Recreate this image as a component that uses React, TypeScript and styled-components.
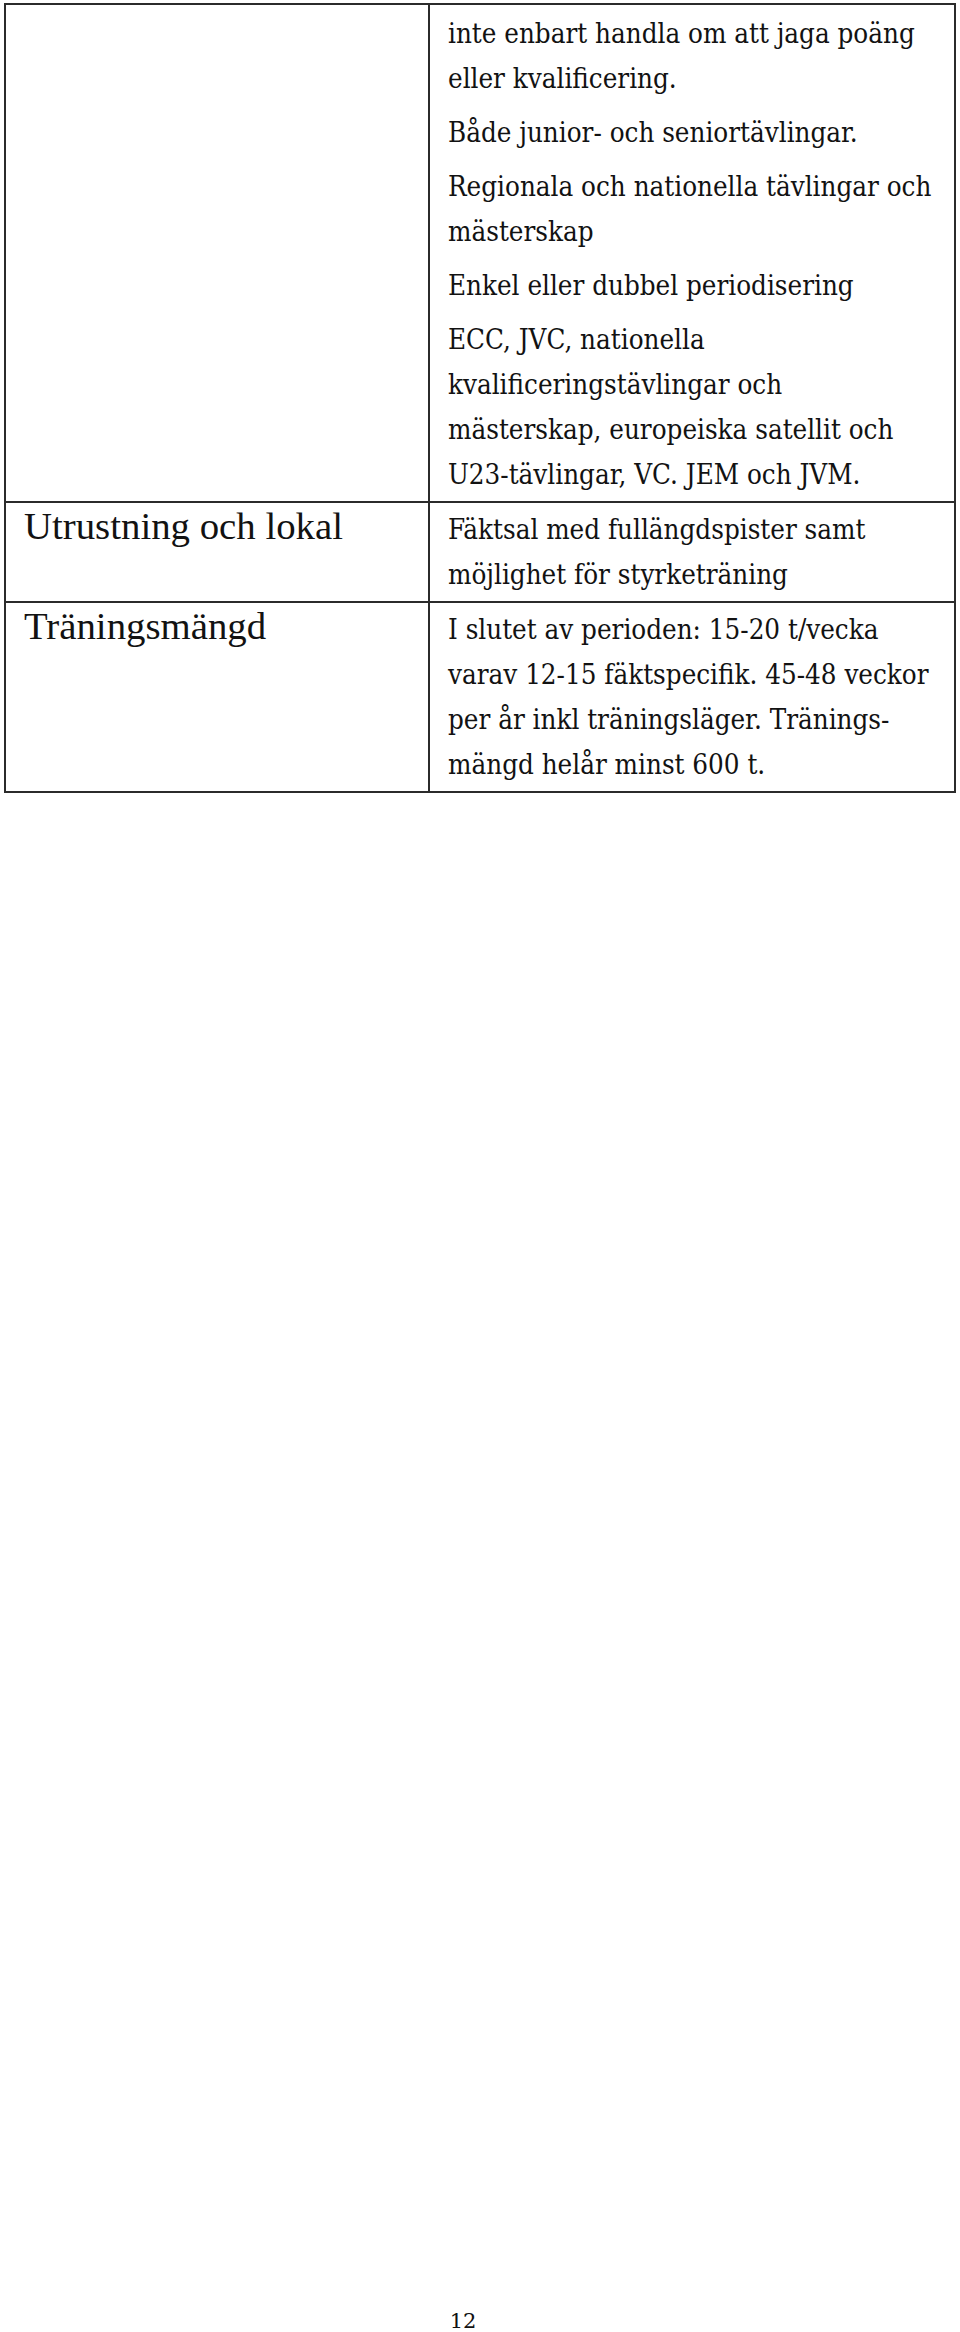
import styled, { createGlobalStyle } from "styled-components";

// -----------------GLOBAL-----------------//
const GlobalStyle = createGlobalStyle`
  html, body {
    margin: 0;
    padding: 0;
    background: #ffffff;
  }
  body {
    color: #121212;
  }
`;

// -----------------STYLES-----------------//
const Page = styled.div`
  display: flex;
  flex-direction: column;
  height: 2332px;
  box-sizing: border-box;
  padding: 3px 4px 0 4px;
`;

const Table = styled.table`
  width: 952px;
  border-collapse: collapse;
  table-layout: fixed;
`;

const LabelCell = styled.td`
  width: 424px;
  box-sizing: border-box;
  border: 2px solid #2b2b2b;
  padding: 0 18px;
  vertical-align: baseline;
  font-family: "Liberation Serif", "Times New Roman", serif;
  font-size: 38.8px;
  line-height: 45px;
`;

const TextCell = styled.td<{ $lead?: number }>`
  border: 2px solid #2b2b2b;
  padding: ${(p) => 2 + (p.$lead ?? 0)}px 18px 4px 18px;
  vertical-align: baseline;
  font-family: "DejaVu Serif Condensed", "DejaVu Serif", serif;
  font-stretch: condensed;
  font-size: 27.5px;
  line-height: 45px;
`;

const Para = styled.p`
  margin: 0;
  white-space: nowrap;
  & + & {
    margin-top: 9px;
  }
`;

const Footer = styled.div`
  margin-top: auto;
  padding-right: 34px;
  text-align: center;
  font-family: "DejaVu Serif", "Liberation Serif", serif;
  font-size: 21px;
  line-height: 21px;
`;

// -----------------DATA-----------------//
interface Row {
  label: string
  paras: string[][]
  lead?: number
}

const rows: Row[] = [
  {
    label: "",
    lead: 4,
    paras: [
      ["inte enbart handla om att jaga poäng", "eller kvalificering."],
      ["Både junior- och seniortävlingar."],
      ["Regionala och nationella tävlingar och", "mästerskap"],
      ["Enkel eller dubbel periodisering"],
      [
        "ECC, JVC, nationella",
        "kvalificeringstävlingar och",
        "mästerskap, europeiska satellit och",
        "U23-tävlingar, VC. JEM och JVM.",
      ],
    ],
  },
  {
    label: "Utrustning och lokal",
    paras: [["Fäktsal med fullängdspister samt", "möjlighet för styrketräning"]],
  },
  {
    label: "Träningsmängd",
    paras: [
      [
        "I slutet av perioden: 15-20 t/vecka",
        "varav 12-15 fäktspecifik. 45-48 veckor",
        "per år inkl  träningsläger. Tränings-",
        "mängd helår minst 600 t.",
      ],
    ],
  },
];

// -----------------COMPONENT-----------------//
function App() {
  return (
    <>
      <GlobalStyle />
      <Page>
        <Table>
          <tbody>
            {rows.map((row, i) => (
              <tr key={i}>
                <LabelCell>{row.label}</LabelCell>
                <TextCell $lead={row.lead}>
                  {row.paras.map((lines, j) => (
                    <Para key={j}>
                      {lines.map((line, k) => (
                        <span key={k}>
                          {k > 0 && <br />}
                          {line}
                        </span>
                      ))}
                    </Para>
                  ))}
                </TextCell>
              </tr>
            ))}
          </tbody>
        </Table>
        <Footer>12</Footer>
      </Page>
    </>
  );
}

export default App
